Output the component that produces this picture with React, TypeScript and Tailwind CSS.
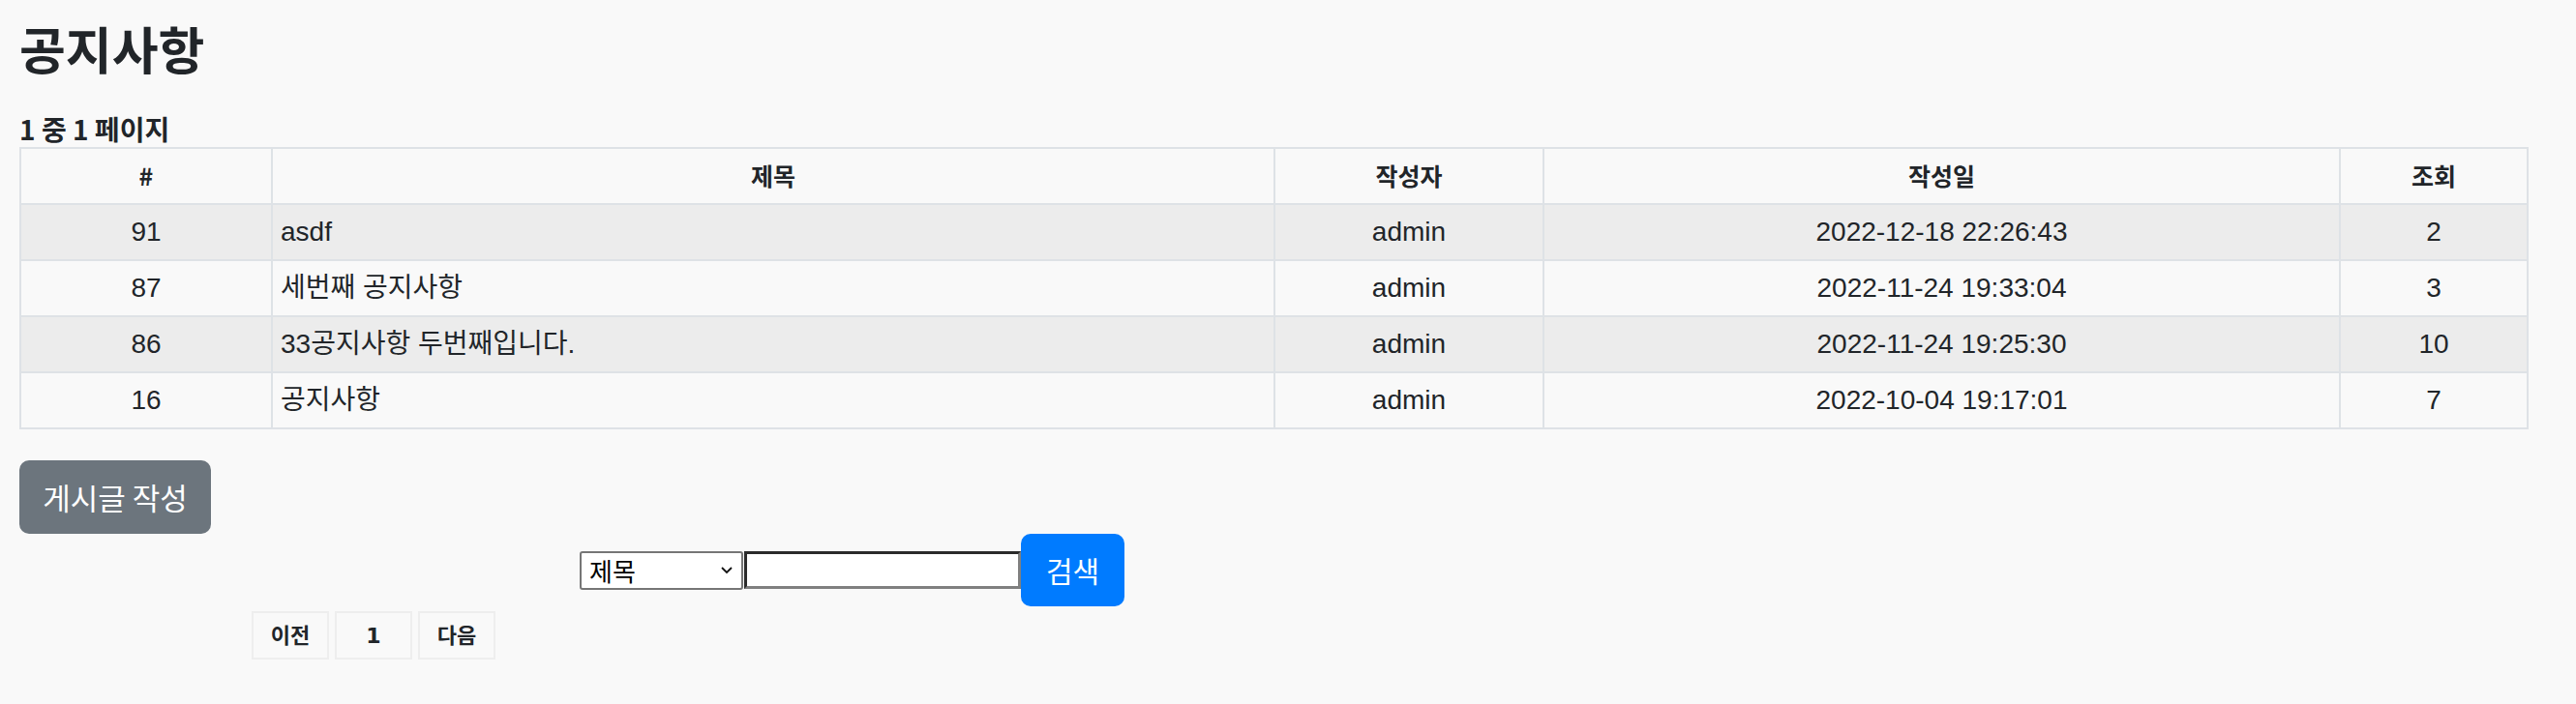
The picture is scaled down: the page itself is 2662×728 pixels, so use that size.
import React from "react";

type Notice = {
  id: number;
  title: string;
  writer: string;
  date: string;
  views: number;
};

const notices: Notice[] = [
  { id: 91, title: "asdf", writer: "admin", date: "2022-12-18 22:26:43", views: 2 },
  { id: 87, title: "세번째 공지사항", writer: "admin", date: "2022-11-24 19:33:04", views: 3 },
  { id: 86, title: "33공지사항 두번째입니다.", writer: "admin", date: "2022-11-24 19:25:30", views: 10 },
  { id: 16, title: "공지사항", writer: "admin", date: "2022-10-04 19:17:01", views: 7 },
];

const KR = "font-['Noto_Sans_CJK_KR',sans-serif]";

export default function App() {
  return (
    <div className="min-h-[728px] bg-[#f9f9f9] pl-5 pt-[19px] text-[#212529] font-['Liberation_Sans','Noto_Sans_CJK_KR',sans-serif]">
      <h1 className={`${KR} text-[52px] font-bold leading-[62px]`}>공지사항</h1>
      <h5 className={`${KR} mt-[35px] text-[28px] font-bold leading-[34px]`}>1 중 1 페이지</h5>

      <table className="mt-[2px] w-[2591px] table-fixed border-collapse border-2 border-[#dee2e6] text-[28px]">
        <colgroup>
          <col className="w-[260px]" />
          <col className="w-[1036px]" />
          <col className="w-[278px]" />
          <col className="w-[823px]" />
          <col className="w-[194px]" />
        </colgroup>
        <thead>
          <tr className={`${KR} text-[25px] font-bold`}>
            <th className="h-[58px] border-2 border-[#dee2e6] text-center">#</th>
            <th className="h-[58px] border-2 border-[#dee2e6] text-center">제목</th>
            <th className="h-[58px] border-2 border-[#dee2e6] text-center">작성자</th>
            <th className="h-[58px] border-2 border-[#dee2e6] text-center">작성일</th>
            <th className="h-[58px] border-2 border-[#dee2e6] text-center">조회</th>
          </tr>
        </thead>
        <tbody>
          {notices.map((n, i) => (
            <tr key={n.id} className={i % 2 === 0 ? "bg-[#ececec]" : "bg-[#f9f9f9]"}>
              <td className="h-[58px] border-2 border-[#dee2e6] text-center">{n.id}</td>
              <td className="h-[58px] border-2 border-[#dee2e6] px-2 text-left">{n.title}</td>
              <td className="h-[58px] border-2 border-[#dee2e6] text-center">{n.writer}</td>
              <td className="h-[58px] border-2 border-[#dee2e6] text-center">{n.date}</td>
              <td className="h-[58px] border-2 border-[#dee2e6] text-center">{n.views}</td>
            </tr>
          ))}
        </tbody>
      </table>

      <button className={`${KR} mt-[32px] flex h-[76px] w-[198px] items-center justify-center rounded-[10px] bg-[#6c757d] text-[31px] text-white`}>
        게시글 작성
      </button>

      <form className="ml-[579px] flex items-center" onSubmit={(e) => e.preventDefault()}>
        <div className="relative">
          <select className={`${KR} h-[40px] w-[169px] appearance-none rounded-[3px] border-2 border-[#767676] bg-white pl-[8px] text-[26px] leading-[34px] text-black`}>
            <option>제목</option>
            <option>내용</option>
            <option>작성자</option>
          </select>
          <svg className="pointer-events-none absolute right-[10px] top-[15px]" width="14" height="10" viewBox="0 0 14 10" fill="none">
            <path d="M2 2l5 5 5-5" stroke="#111" strokeWidth="1.8" />
          </svg>
        </div>
        <input
          type="text"
          className="ml-px h-[39px] w-[286px] border-[3px] border-t-[#2b2b2b] border-l-[#2b2b2b] border-b-[#808080] border-r-[#808080] bg-white"
        />
        <button type="submit" className={`${KR} flex h-[75px] w-[107px] items-center justify-center rounded-[10px] bg-[#007bff] text-[30px] text-white`}>
          검색
        </button>
      </form>

      <div className="ml-[240px] mt-[5px] flex gap-[6px] font-['DejaVu_Sans','Noto_Sans_CJK_KR',sans-serif] text-[22px] font-bold">
        <div className="flex h-[50px] w-[80px] items-center justify-center border-2 border-[#eeeeee]">이전</div>
        <div className="flex h-[50px] w-[80px] items-center justify-center border-2 border-[#eeeeee]">1</div>
        <div className="flex h-[50px] w-[80px] items-center justify-center border-2 border-[#eeeeee]">다음</div>
      </div>
    </div>
  );
}
